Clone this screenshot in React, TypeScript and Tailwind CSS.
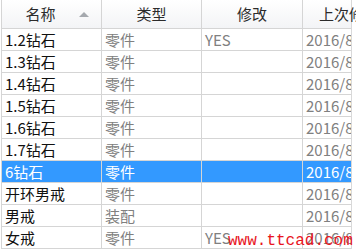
import React from 'react';

type Row = { name: string; type: string; mod: string; date: string };

const rows: Row[] = [
  { name: '1.2钻石', type: '零件', mod: 'YES', date: '2016/8/12' },
  { name: '1.3钻石', type: '零件', mod: '', date: '2016/8/12' },
  { name: '1.4钻石', type: '零件', mod: '', date: '2016/8/12' },
  { name: '1.5钻石', type: '零件', mod: '', date: '2016/8/12' },
  { name: '1.6钻石', type: '零件', mod: '', date: '2016/8/12' },
  { name: '1.7钻石', type: '零件', mod: '', date: '2016/8/12' },
  { name: '6钻石', type: '零件', mod: '', date: '2016/8/12' },
  { name: '开环男戒', type: '零件', mod: '', date: '2016/8/12' },
  { name: '男戒', type: '装配', mod: '', date: '2016/8/12' },
  { name: '女戒', type: '零件', mod: 'YES', date: '2016/8/12' },
];

const cols = 'grid grid-cols-[100px_100px_101px_1fr]';

const App: React.FC = () => {
  return (
    <div
      className="relative w-[356px] h-[251px] overflow-hidden bg-white pl-[1px]"
      style={{ fontFamily: '"Noto Sans CJK SC", "Noto Sans", sans-serif' }}
    >
      <div className="w-[351px] border-r border-[#d9d9d9]">
        <div className={`${cols} h-[29px] border-b border-l border-[#d5d5d5] bg-gradient-to-b from-white to-[#f3f4f6] text-[15px] text-[#2b2b2b]`}>
          <div className="relative flex items-center justify-center border-r border-[#d5d5d5] pr-[22px]">
            名称
            <span className="absolute right-[12px] top-[12px] h-0 w-0 border-x-[5px] border-b-[5px] border-x-transparent border-b-[#a5a9ae]" />
          </div>
          <div className="flex items-center justify-center border-r border-[#d5d5d5]">类型</div>
          <div className="flex items-center justify-center border-r border-[#d5d5d5]">修改</div>
          <div className="flex items-center pl-[16px] whitespace-nowrap">上次修改</div>
        </div>
        {rows.map((r, i) => {
          const sel = i === 6;
          return (
            <div
              key={i}
              className={`${cols} h-[22px] border-b border-l border-[#d5d5d5] text-[15px] leading-[21px] whitespace-nowrap ${
                sel ? 'bg-[#3399ff] text-white' : ''
              }`}
            >
              <div className={`pl-[3px] border-r border-[#d5d5d5] ${sel ? '' : 'text-[#111]'}`}>{r.name}</div>
              <div className={`pl-[3px] border-r border-[#d5d5d5] ${sel ? '' : 'text-[#808080]'}`}>{r.type}</div>
              <div className={`pl-[3px] border-r border-[#d5d5d5] ${sel ? '' : 'text-[#808080]'}`}>{r.mod}</div>
              <div className={`pl-[3px] overflow-hidden ${sel ? '' : 'text-[#808080]'}`}>{r.date}</div>
            </div>
          );
        })}
      </div>
      <div
        className="absolute left-[228px] top-[232px] text-[16px] leading-[18px] text-[#e8141e]"
        style={{ fontFamily: '"Liberation Mono", monospace' }}
      >
        www.ttcad.com
      </div>
    </div>
  );
};

export default App;
